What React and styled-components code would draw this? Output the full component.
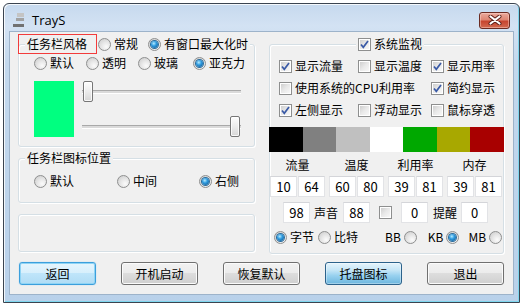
import React from 'react';
import styled, { createGlobalStyle, css } from 'styled-components';

const Global = createGlobalStyle`
  html, body { margin: 0; padding: 0; background: #fff; }
  body {
    font-family: "Noto Sans CJK SC", "Noto Sans", sans-serif;
    font-size: 12px;
    color: #000;
  }
  #root { padding: 3px; }
`;

const Window = styled.div`
  box-sizing: border-box;
  width: 517px;
  height: 300px;
  border: 1px solid #3b4450;
  border-radius: 6px 6px 0 0;
  background: linear-gradient(180deg, #c6d9ee 0px, #d3e2f3 22px, #c3d8ed 60px, #b9d1ea 100%);
  box-shadow: inset 1px 1px 0 rgba(255, 255, 255, 0.8), inset -1px -1px 0 #7fd6ee;
  display: flex;
  flex-direction: column;
`;

const TitleBar = styled.div`
  box-sizing: border-box;
  height: 27px;
  padding: 5px 9px 0 9px;
  display: flex;
  align-items: center;
`;

const TitleText = styled.span`
  margin-left: 8px;
  font-family: "Open Sans", "Noto Sans", sans-serif;
  font-size: 13px;
  line-height: 16px;
  color: #000;
`;

const CloseBtn = styled.div`
  box-sizing: border-box;
  margin-left: auto;
  width: 31px;
  height: 17px;
  border: 1px solid #6b2b22;
  border-radius: 3px;
  background: linear-gradient(180deg, #eaa99c 0%, #de8673 45%, #c7452f 55%, #d26a50 100%);
  box-shadow: inset 0 0 0 1px rgba(255, 220, 210, 0.45);
  display: grid;
  place-items: center;
`;

const Client = styled.div`
  box-sizing: border-box;
  margin: 0 5px;
  height: 264px;
  border: 1px solid #9db3ca;
  background: #f0f0f0;
  display: flex;
  flex-direction: column;
`;

const Main = styled.div`
  display: grid;
  grid-template-columns: 237px 235px;
  column-gap: 14px;
  padding: 0 9px 0 8px;
  align-items: start;
`;

const Column = styled.div`
  display: flex;
  flex-direction: column;
`;

const Group = styled.div`
  position: relative;
  box-sizing: border-box;
  margin-top: ${(p) => p.$mt || 0}px;
  height: ${(p) => (p.$h ? `${p.$h}px` : 'auto')};
  padding-bottom: ${(p) => p.$pb || 0}px;
  border: 1px solid #d5dfe5;
  border-radius: 3px;
  box-shadow: inset 1px 1px 0 #fff, 1px 1px 0 #fff;
  display: flex;
  flex-direction: column;
`;

const Legend = styled.div`
  align-self: flex-start;
  height: 20px;
  margin-top: -11px;
  margin-left: ${(p) => p.$ml || 0}px;
  padding: 0 2px;
  background: #f0f0f0;
  display: flex;
  align-items: center;
  line-height: 16px;
`;

const RedMark = styled.div`
  position: absolute;
  left: -1px;
  top: -11px;
  width: 79px;
  height: 20px;
  box-sizing: border-box;
  border: 1px solid #f23b3b;
  pointer-events: none;
`;

const Opt = styled.label`
  display: inline-flex;
  align-items: center;
  gap: 3px;
  margin-left: ${(p) => p.$ml || 0}px;
  line-height: 16px;
  white-space: nowrap;
`;

const Txt = styled.span`
  margin-left: ${(p) => p.$ml || 0}px;
  line-height: 16px;
  white-space: nowrap;
`;

const RadioBox = styled.span`
  box-sizing: border-box;
  width: 13px;
  height: 13px;
  flex: none;
  border-radius: 50%;
  border: 1px solid #8e8f8f;
  background: radial-gradient(circle at 65% 70%, #fbfbfb 0%, #e6e6e6 45%, #c9c9c9 100%);
  display: grid;
  place-items: center;
  margin-left: ${(p) => p.$ml || 0}px;
`;

const RadioDot = styled.span`
  width: 7px;
  height: 7px;
  border-radius: 50%;
  background: radial-gradient(circle at 40% 35%, #b6ecff 0%, #2f9be0 40%, #0b4f86 100%);
  box-shadow: 0 0 0 1px #2a6c9c;
`;

const Radio = ({ checked, ml }) => (
  <RadioBox $ml={ml}>{checked && <RadioDot />}</RadioBox>
);

const CheckBoxEl = styled.span`
  position: relative;
  box-sizing: border-box;
  width: 13px;
  height: 13px;
  flex: none;
  border: 1px solid #8e8f8f;
  background: #fff;
  display: grid;
  place-items: center;
  &::before {
    content: '';
    position: absolute;
    inset: 1px;
    background: linear-gradient(135deg, #cfcfcf 0%, #e9e9e9 50%, #f7f7f7 100%);
  }
  svg { position: relative; }
`;

const Check = ({ checked }) => (
  <CheckBoxEl>
    {checked && (
      <svg width="11" height="11" viewBox="0 0 11 11">
        <path d="M2 5.5 L4.3 8.3 L9 2" fill="none" stroke="#3a5aa6" strokeWidth="1.7" />
      </svg>
    )}
  </CheckBoxEl>
);

const RadioRow = styled.div`
  display: grid;
  grid-template-columns: ${(p) => p.$cols};
  margin-top: ${(p) => p.$mt || 0}px;
  padding-left: 15px;
  height: 16px;
  align-items: center;
`;

const SwatchRow = styled.div`
  display: flex;
  margin-top: 10px;
  padding-left: 15px;
`;

const Swatch = styled.div`
  width: 40px;
  height: 56px;
  background: #00ff80;
`;

const Sliders = styled.div`
  margin-left: 8px;
  width: 159px;
  height: 56px;
  display: flex;
  flex-direction: column;
  justify-content: space-between;
`;

const Slider = styled.div`
  position: relative;
  height: 21px;
  display: flex;
  align-items: center;
  justify-content: ${(p) => (p.$end ? 'flex-end' : 'flex-start')};
  &::before {
    content: '';
    position: absolute;
    left: 0;
    right: 0;
    top: 9px;
    height: 2px;
    border-top: 1px solid #a9a9a9;
    border-bottom: 1px solid #fff;
    background: #dadada;
  }
`;

const Thumb = styled.span`
  position: relative;
  box-sizing: border-box;
  width: 10px;
  height: 21px;
  margin: 0 ${(p) => (p.$end ? 1 : 0)}px 0 ${(p) => (p.$end ? 0 : 1)}px;
  border: 1px solid #767676;
  border-radius: 2px;
  background: linear-gradient(180deg, #fdfdfd 0%, #ececec 50%, #d6d6d6 100%);
  box-shadow: inset 0 0 0 1px rgba(255, 255, 255, 0.8);
`;

const CheckGrid = styled.div`
  display: grid;
  grid-template-columns: 79px 73px auto;
  grid-auto-rows: 22px;
  align-items: center;
  margin-top: 1px;
  padding-left: 9px;
`;

const ColorBar = styled.div`
  display: grid;
  grid-template-columns: repeat(7, 1fr);
  height: 25px;
  margin: 6px -1px 0;
`;

const Color = styled.div`
  background: ${(p) => p.$c};
`;

const PairGrid = styled.div`
  display: grid;
  grid-template-columns: repeat(4, 55px);
  column-gap: 4px;
  margin-top: ${(p) => p.$mt}px;
`;

const ColLabel = styled.div`
  text-align: center;
  line-height: 16px;
`;

const Pair = styled.div`
  display: flex;
  gap: 1px;
`;

const Field = styled.div`
  box-sizing: border-box;
  width: 27px;
  height: 21px;
  margin-left: ${(p) => p.$ml || 0}px;
  background: #fff;
  border: 1px solid #e2e3e6;
  border-top-color: #d4d5d9;
  display: grid;
  place-items: center;
  font-size: 13px;
  line-height: 16px;
`;

const FlowRow = styled.div`
  display: flex;
  align-items: center;
  margin-top: ${(p) => p.$mt}px;
  padding-left: ${(p) => p.$pl}px;
  height: ${(p) => p.$h}px;
`;

const Spacer = styled.span`
  margin-left: ${(p) => p.$ml}px;
  display: inline-flex;
`;

const ButtonRow = styled.div`
  display: flex;
  justify-content: space-between;
  margin-top: 8px;
  padding: 0 9px;
`;

const Button = styled.button`
  box-sizing: border-box;
  width: 77px;
  height: 23px;
  padding: 0;
  font: inherit;
  font-size: 12px;
  color: #000;
  border-radius: 3px;
  border: 1px solid #707070;
  background: linear-gradient(180deg, #f2f2f2 0%, #ebebeb 50%, #dddddd 50%, #cfcfcf 100%);
  box-shadow: inset 0 0 0 1px #fbfbfb;
  ${(p) =>
    p.$variant === 'focus' &&
    css`
      border-color: #3c9fdc;
      background: linear-gradient(180deg, #e6f5fd 0%, #d6effc 50%, #bfe5fa 50%, #b0dcf5 100%);
      box-shadow: inset 0 0 0 1px #8fd4f5, 0 0 1px #6ec3ee;
    `}
  ${(p) =>
    p.$variant === 'hot' &&
    css`
      border-color: #2c628b;
      background: linear-gradient(180deg, #e5f4fc 0%, #c4e5f6 35%, #98d1ef 60%, #6db6de 100%);
      box-shadow: inset 0 0 0 1px rgba(255, 255, 255, 0.35);
    `}
`;

const TitleIcon = () => (
  <svg width="11" height="14" viewBox="0 0 11 14">
    <rect x="4" y="0" width="7" height="4" fill="#c4c4c4" />
    <rect x="3" y="5" width="8" height="3" fill="#a2a2a2" />
    <rect x="0" y="11" width="11" height="3" fill="#717171" />
  </svg>
);

const CloseGlyph = () => (
  <svg width="14" height="10" viewBox="0 0 14 10">
    <path d="M2.5 1.5 L11.5 8.5 M11.5 1.5 L2.5 8.5" stroke="#5b1d16" strokeWidth="4" strokeLinecap="round" />
    <path d="M2.5 1.5 L11.5 8.5 M11.5 1.5 L2.5 8.5" stroke="#ffffff" strokeWidth="2.2" strokeLinecap="round" />
  </svg>
);

const colors = ['#000000', '#808080', '#c0c0c0', '#ffffff', '#00a800', '#a8a800', '#a80000'];
const pairs = [
  ['流量', '10', '64'],
  ['温度', '60', '80'],
  ['利用率', '39', '81'],
  ['内存', '39', '81'],
];

export default function App() {
  return (
    <>
      <Global />
      <Window>
        <TitleBar>
          <TitleIcon />
          <TitleText>TrayS</TitleText>
          <CloseBtn>
            <CloseGlyph />
          </CloseBtn>
        </TitleBar>
        <Client>
          <Main>
            <Column>
              <Group $mt={12} $pb={9}>
                <RedMark />
                <Legend $ml={6}>
                  <Txt>任务栏风格</Txt>
                  <Opt $ml={11}>
                    <Radio />
                    常规
                  </Opt>
                  <Opt $ml={10}>
                    <Radio checked />
                    有窗口最大化时
                  </Opt>
                </Legend>
                <RadioRow $cols="52px 52px 55px auto" $mt={1}>
                  <Opt><Radio />默认</Opt>
                  <Opt><Radio />透明</Opt>
                  <Opt><Radio />玻璃</Opt>
                  <Opt><Radio checked />亚克力</Opt>
                </RadioRow>
                <SwatchRow>
                  <Swatch />
                  <Sliders>
                    <Slider>
                      <Thumb />
                    </Slider>
                    <Slider $end>
                      <Thumb $end />
                    </Slider>
                  </Sliders>
                </SwatchRow>
              </Group>
              <Group $mt={11} $pb={13}>
                <Legend $ml={6}>
                  <Txt>任务栏图标位置</Txt>
                </Legend>
                <RadioRow $cols="83px 82px auto" $mt={5}>
                  <Opt><Radio />默认</Opt>
                  <Opt><Radio />中间</Opt>
                  <Opt><Radio checked />右侧</Opt>
                </RadioRow>
              </Group>
              <Group $mt={11} $h={38} />
            </Column>
            <Group $mt={12} $h={210}>
              <Legend $ml={86}>
                <Opt>
                  <Check checked />
                  系统监视
                </Opt>
              </Legend>
              <CheckGrid>
                <Opt><Check checked />显示流量</Opt>
                <Opt><Check />显示温度</Opt>
                <Opt><Check checked />显示用率</Opt>
                <Opt style={{ gridColumn: 'span 2' }}><Check />使用系统的CPU利用率</Opt>
                <Opt><Check checked />简约显示</Opt>
                <Opt><Check checked />左侧显示</Opt>
                <Opt><Check />浮动显示</Opt>
                <Opt><Check />鼠标穿透</Opt>
              </CheckGrid>
              <ColorBar>
                {colors.map((c) => (
                  <Color key={c} $c={c} />
                ))}
              </ColorBar>
              <PairGrid $mt={5}>
                {pairs.map(([l]) => (
                  <ColLabel key={l}>{l}</ColLabel>
                ))}
              </PairGrid>
              <PairGrid $mt={3}>
                {pairs.map(([l, a, b]) => (
                  <Pair key={l}>
                    <Field>{a}</Field>
                    <Field>{b}</Field>
                  </Pair>
                ))}
              </PairGrid>
              <FlowRow $mt={5} $pl={13} $h={21}>
                <Field>98</Field>
                <Txt $ml={4}>声音</Txt>
                <Field $ml={5}>88</Field>
                <Spacer $ml={9}>
                  <Check />
                </Spacer>
                <Field $ml={9}>0</Field>
                <Txt $ml={5}>提醒</Txt>
                <Field $ml={4}>0</Field>
              </FlowRow>
              <FlowRow $mt={6} $pl={4} $h={16}>
                <Opt><Radio checked />字节</Opt>
                <Opt $ml={4}><Radio />比特</Opt>
                <Opt $ml={27}>BB<Radio /></Opt>
                <Opt $ml={11}>KB<Radio checked /></Opt>
                <Opt $ml={9}>MB<Radio /></Opt>
              </FlowRow>
            </Group>
          </Main>
          <ButtonRow>
            <Button $variant="focus">返回</Button>
            <Button>开机启动</Button>
            <Button>恢复默认</Button>
            <Button $variant="hot">托盘图标</Button>
            <Button>退出</Button>
          </ButtonRow>
        </Client>
      </Window>
    </>
  );
}
